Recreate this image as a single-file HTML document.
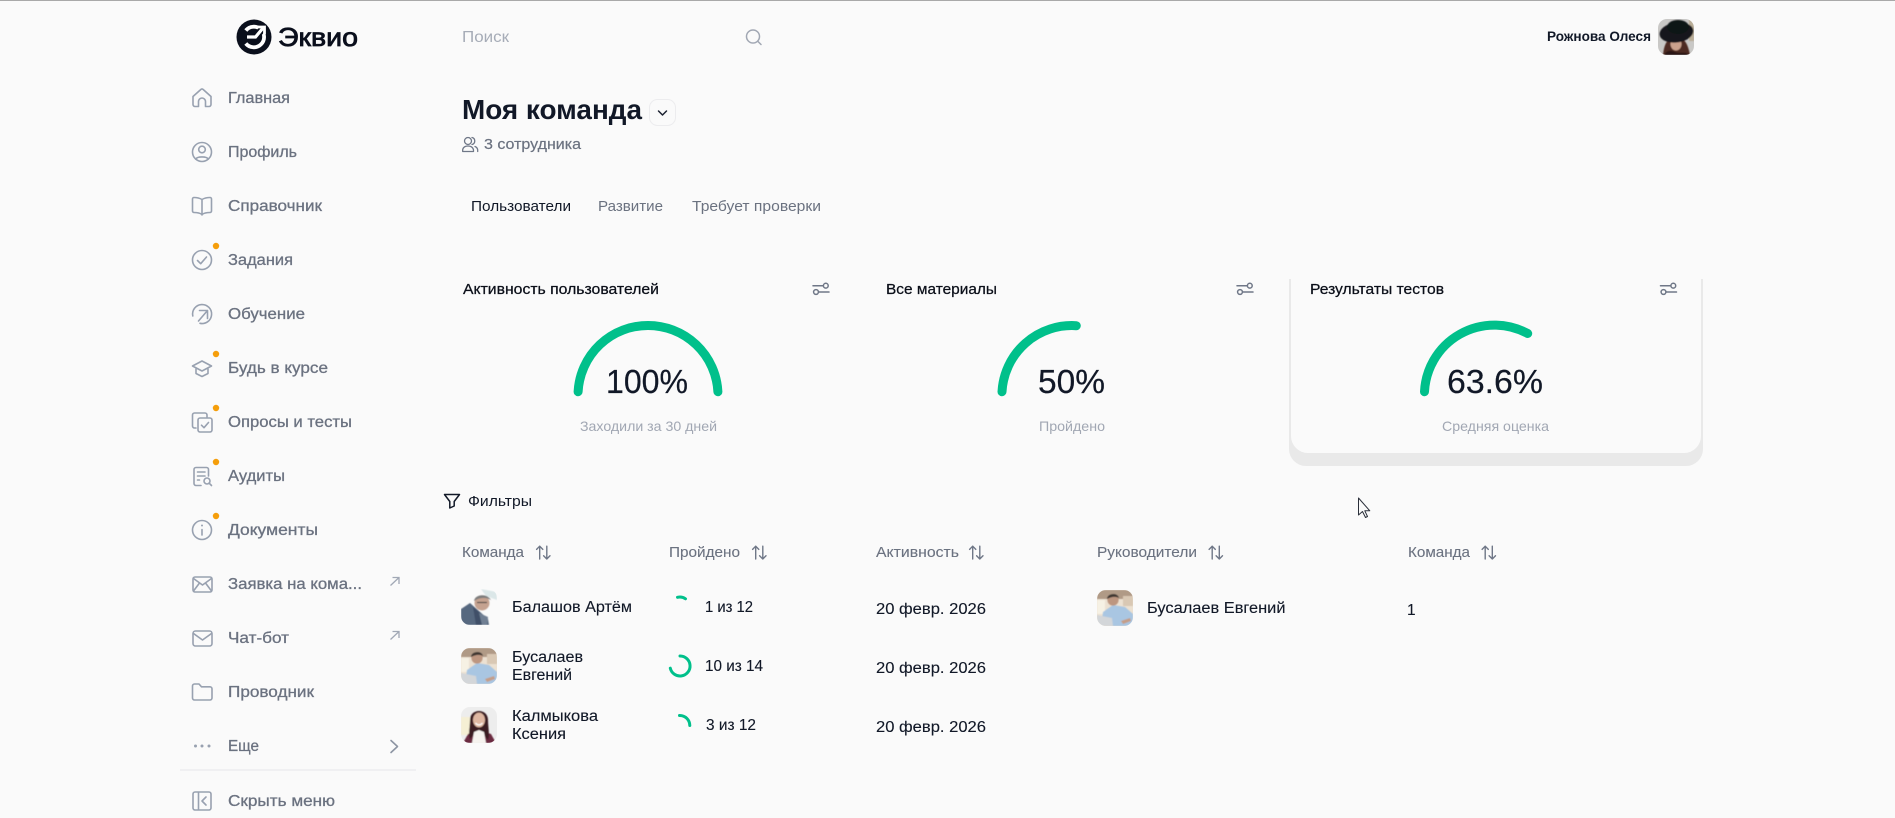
<!DOCTYPE html>
<html lang="ru">
<head>
<meta charset="utf-8">
<title>Моя команда</title>
<style>
html,body{margin:0;padding:0;background:#fafafa;width:1895px;height:818px;overflow:hidden}
svg{display:block}
text{font-family:"Liberation Sans","Noto Sans CJK JP",sans-serif;white-space:pre}
.n{font-size:16px;fill:#6b7280;stroke:#6b7280;stroke-width:.3}
.i{fill:none;stroke:#98a1b0;stroke-width:1.6;stroke-linecap:round;stroke-linejoin:round}
.d{fill:#f59e0b}
.h{font-size:15px;fill:#6b7280;stroke:#6b7280;stroke-width:.1}
.b{font-size:15.5px;fill:#111827;stroke:#111827;stroke-width:.12}
.c{font-size:15px;fill:#0b0f19;stroke:#0b0f19;stroke-width:.25}
.s{font-size:14px;fill:#a1a7b3}
.p{font-size:33px;fill:#111827;stroke:#111827;stroke-width:.2}
.g{fill:none;stroke:#00c08b;stroke-width:9;stroke-linecap:round}
.r{fill:none;stroke:#00c08b;stroke-width:3;stroke-linecap:round}
.f{fill:none;stroke:#6f7787;stroke-width:1.5;stroke-linecap:round}
</style>
</head>
<body>
<svg xmlns="http://www.w3.org/2000/svg" width="1895" height="818" viewBox="0 0 1895 818">
<defs>
<clipPath id="cp"><rect x="0" y="0" width="36" height="36" rx="9"/></clipPath>
<clipPath id="cardclip"><rect x="1280" y="279" width="430" height="200"/></clipPath>
<filter id="bl" x="-10%" y="-10%" width="120%" height="120%"><feGaussianBlur stdDeviation=".55"/></filter>
<g id="sort" fill="none" stroke="#6f7787" stroke-width="1.4" stroke-linecap="round" stroke-linejoin="round">
<path d="M3.700 14V1.200M.6 4.400 3.700 1.200 6.800 4.400"/>
<path d="M10.800 1.200V14M7.600 10.800l3.200 3.200 3.200-3.200"/>
</g>
<g id="set">
<path class="f" d="M0 1.700H10"/><circle class="f" cx="12.800" cy="1.700" r="2.400"/>
<path class="f" d="M6 8H16"/><circle class="f" cx="3" cy="8" r="2.400"/>
</g>
<g id="a1" clip-path="url(#cp)">
<rect width="36" height="36" fill="#fafafa"/>
<g filter="url(#bl)">
<path d="M20 0 36 3V11L25 7Z" fill="#dbe7e8"/>
<path d="M0 20 9 14 18 22 27 30 28 36H0Z" fill="#56687f"/>
<path d="M12 18 19 24 22 36H15Z" fill="#3f5068"/>
<path d="M18 24 27 28 26 36H21Z" fill="#6f7f93"/>
<circle cx="21" cy="14" r="7.500" fill="#c5a290"/>
<path d="M13 12C14 5 26 4 30 11 25 8 19 8 13 12Z" fill="#7d7d7d"/>
<path d="M16 13.500H26" stroke="#3c3c3c" stroke-width="1.100"/>
</g>
</g>
<g id="a2" clip-path="url(#cp)">
<rect width="36" height="36" fill="#ece1d2"/>
<g filter="url(#bl)">
<rect width="36" height="9" fill="#b09a86"/>
<rect x="0" y="10" width="8" height="14" fill="#f6f1e4"/>
<rect x="26" y="6" width="10" height="10" fill="#d9c8b4"/>
<path d="M6 22 16 15 28 17 36 24V36H4Z" fill="#a9c6e2"/>
<circle cx="16" cy="10" r="5.600" fill="#bd9680"/>
<path d="M10 9C10 3 21 2 22 8 18 6 14 7 10 9Z" fill="#3f3733"/>
<path d="M0 25 15 28 16 36H0Z" fill="#d3d6d9"/>
<path d="M24 31 33 28 34 31 26 34Z" fill="#c49e88"/>
</g>
</g>
<g id="a3" clip-path="url(#cp)">
<rect width="36" height="36" fill="#ededed"/>
<g filter="url(#bl)">
<rect x="0" y="10" width="9" height="18" fill="#f5efd4"/>
<path d="M2 36 7 27 12 25H24L30 27 35 36Z" fill="#6b2a41"/>
<path d="M9 13C9 1 27 1 27 13 27 20 29 28 27 33L22 26H14L9 32C7 26 9 20 9 13Z" fill="#3a1c20"/>
<ellipse cx="18" cy="13" rx="6" ry="7.400" fill="#dfb7a2"/>
<path d="M14.500 16C16.500 18.500 19.500 18.500 21.500 16" stroke="#fff" stroke-width="1.300" fill="none"/>
<path d="M11 36 13 25 18 23 23 25 25 36Z" fill="#f6f3ef"/>
</g>
</g>
</defs>

<rect width="1895" height="818" fill="#fafafa"/>
<rect x="0" y="0" width="1895" height="1" fill="#a9a9a9"/>

<!-- logo -->
<circle cx="254" cy="37" r="17.500" fill="#0a0f1c"/>
<path d="M245.800 30.500A10.300 10.300 0 1 1 245.800 43.500" fill="none" stroke="#fff" stroke-width="3.800"/>
<path d="M247 37H255.500L264 27" fill="none" stroke="#0a0f1c" stroke-width="7"/>
<path d="M247 37H255.500L263 28" fill="none" stroke="#fff" stroke-width="3.200"/>
<path d="M257.500 27H264.500V34" fill="none" stroke="#fff" stroke-width="2.800"/>
<text x="278" y="46" font-size="26" fill="#0a0f1c" stroke="#0a0f1c" stroke-width=".8" textLength="80" lengthAdjust="spacingAndGlyphs">Эквио</text>

<!-- nav icons -->
<path class="i" d="M193 96.500 200.800 89.500a1.800 1.800 0 0 1 2.400 0L211 96.500V104.500a2 2 0 0 1-2 2H205.500V101.500a3.500 3.500 0 0 0-7 0V106.500H195a2 2 0 0 1-2-2Z"/>
<circle class="i" cx="202" cy="152" r="9.500"/><circle class="i" cx="202" cy="149.500" r="3.300"/><path class="i" d="M195.800 159.200C197 156.200 207 156.200 208.200 159.200"/>
<path class="i" d="M202 199.500C199.500 198 196 197.500 194 197.500A1.500 1.500 0 0 0 192.500 199V211A1.500 1.500 0 0 0 194 212.500C197 212.500 200 213 202 214.500 204 213 207 212.500 210 212.500A1.500 1.500 0 0 0 211.500 211V199A1.500 1.500 0 0 0 210 197.500C208 197.500 204.500 198 202 199.500ZM202 199.500V215"/>
<circle class="i" cx="202" cy="260" r="9.500"/><path class="i" d="M197.500 260.500 200.700 263.700 206.500 257"/>
<path class="i" d="M192.800 316A9.500 9.500 0 1 1 200 323.300"/><path class="i" d="M198.500 321 207.500 310.500M199.500 310.500H207.500V318.500"/>
<path class="i" d="M192.500 366 202 361 211.500 366 202 371ZM196 369V373.500L202 376.500 208 373.500V369"/>
<path class="i" d="M196 428H194.500A2 2 0 0 1 192.500 426V415A2 2 0 0 1 194.500 413H205A2 2 0 0 1 207 415V417"/><rect class="i" x="198" y="418" width="14" height="14" rx="2"/><path class="i" d="M201.500 425.200 204 427.700 208.500 422.500"/>
<path class="i" d="M208.500 476V469.500A2 2 0 0 0 206.500 467.500H196A2 2 0 0 0 194 469.500V483.500A2 2 0 0 0 196 485.500H201"/><path class="i" d="M197.500 472H205M197.500 476H205M197.500 480H199.500"/><circle class="i" cx="207" cy="481" r="3"/><path class="i" d="M209.300 483.300 211.500 485.500"/>
<circle class="i" cx="202" cy="530" r="9.500"/><path class="i" d="M202 529.500V535"/><circle cx="202" cy="525.500" r="1" fill="#98a1b0"/>
<rect class="i" x="193" y="577" width="19" height="15" rx="2"/><path class="i" d="M193.500 578.500 202.500 585 211.500 578.500M193.500 591 199.500 583M211.500 591 205.500 583"/>
<rect class="i" x="193" y="631" width="19" height="15" rx="2.500"/><path class="i" d="M193.500 633.500 202.500 640 211.500 633.500"/>
<path class="i" d="M192.500 686A2 2 0 0 1 194.500 684H199L201.500 686.800H210A2 2 0 0 1 212 688.800V698A2 2 0 0 1 210 700H194.500A2 2 0 0 1 192.500 698Z"/>
<circle cx="195.500" cy="746" r="1.500" fill="#98a1b0"/><circle cx="202" cy="746" r="1.500" fill="#98a1b0"/><circle cx="209" cy="746" r="1.500" fill="#98a1b0"/>
<rect class="i" x="193" y="792" width="18" height="18" rx="2"/><path class="i" d="M198.500 792.500V809.500M206 797 202 801 206 805"/>

<circle class="d" cx="216" cy="246" r="3.200"/>
<circle class="d" cx="216" cy="354" r="3.200"/>
<circle class="d" cx="216" cy="408" r="3.200"/>
<circle class="d" cx="216" cy="462" r="3.200"/>
<circle class="d" cx="216" cy="516" r="3.200"/>

<path d="M390.500 585.500 399 577.500M392.500 577.500H399V584" fill="none" stroke="#a1a8b5" stroke-width="1.300"/>
<path d="M390.500 639.500 399 631.500M392.500 631.500H399V638" fill="none" stroke="#a1a8b5" stroke-width="1.300"/>
<path d="M391 740.500 397.500 746.500 391 752.500" fill="none" stroke="#8d95a3" stroke-width="1.600" stroke-linecap="round" stroke-linejoin="round"/>
<rect x="180" y="769.500" width="236" height="1" fill="#e6e7ea"/>

<!-- nav text -->
<text class="n" x="228" y="103" textLength="62" lengthAdjust="spacingAndGlyphs">Главная</text>
<text class="n" x="228" y="157" textLength="69" lengthAdjust="spacingAndGlyphs">Профиль</text>
<text class="n" x="228" y="211" textLength="94" lengthAdjust="spacingAndGlyphs">Справочник</text>
<text class="n" x="228" y="265" textLength="65" lengthAdjust="spacingAndGlyphs">Задания</text>
<text class="n" x="228" y="319" textLength="77" lengthAdjust="spacingAndGlyphs">Обучение</text>
<text class="n" x="228" y="373" textLength="100" lengthAdjust="spacingAndGlyphs">Будь в курсе</text>
<text class="n" x="228" y="427" textLength="124" lengthAdjust="spacingAndGlyphs">Опросы и тесты</text>
<text class="n" x="228" y="481" textLength="57" lengthAdjust="spacingAndGlyphs">Аудиты</text>
<text class="n" x="228" y="535" textLength="90" lengthAdjust="spacingAndGlyphs">Документы</text>
<text class="n" x="228" y="589" textLength="134" lengthAdjust="spacingAndGlyphs">Заявка на кома...</text>
<text class="n" x="228" y="643" textLength="61" lengthAdjust="spacingAndGlyphs">Чат-бот</text>
<text class="n" x="228" y="697" textLength="86" lengthAdjust="spacingAndGlyphs">Проводник</text>
<text class="n" x="228" y="751" textLength="31" lengthAdjust="spacingAndGlyphs">Еще</text>
<text class="n" x="228" y="806" textLength="107" lengthAdjust="spacingAndGlyphs">Скрыть меню</text>

<!-- top bar -->
<text x="462" y="42" font-size="16" fill="#a6acb7" textLength="47" lengthAdjust="spacingAndGlyphs">Поиск</text>
<circle cx="753" cy="36.500" r="6.500" fill="none" stroke="#a1a7b3" stroke-width="1.500"/><path d="M758 41.500 761 44.500" stroke="#a1a7b3" stroke-width="1.500" stroke-linecap="round"/>
<text x="1547" y="41" font-size="13.500" font-weight="700" fill="#111827" textLength="104" lengthAdjust="spacingAndGlyphs">Рожнова Олеся</text>
<g transform="translate(1658 19)" clip-path="url(#cp)">
<rect width="36" height="36" fill="#c9c8c6"/>
<g filter="url(#bl)">
<rect x="31" width="5" height="22" fill="#b9ad97"/>
<path d="M5 36C6 26 9 18 18 18 27 18 30 26 32 36Z" fill="#4d2c20"/>
<ellipse cx="18" cy="25" rx="5.500" ry="6.500" fill="#cba28d"/>
<ellipse cx="18.500" cy="13.500" rx="17" ry="10" fill="#16171b" transform="rotate(-8 18.500 13.500)"/>
<ellipse cx="20" cy="8" rx="11" ry="7" fill="#111216"/>
<path d="M6 36C9 31 13 31 17 33 23 35 28 32 31 36Z" fill="#2c1712"/>
</g>
</g>

<!-- header -->
<text x="462" y="119" font-size="28" font-weight="700" fill="#111827" textLength="180" lengthAdjust="spacingAndGlyphs">Моя команда</text>
<rect x="649.500" y="99.500" width="26" height="26" rx="8" fill="#fafafa" stroke="#ececee"/>
<path d="M658.500 111 662.500 115 666.500 111" fill="none" stroke="#1b2130" stroke-width="1.500" stroke-linecap="round" stroke-linejoin="round"/>
<circle cx="468" cy="141" r="3.500" fill="none" stroke="#6f7787" stroke-width="1.300"/>
<path d="M462.700 151.500C462.200 147.500 465 146 468 146S473.800 147.500 473.500 151.500Z" fill="none" stroke="#6f7787" stroke-width="1.300" stroke-linejoin="round"/>
<path d="M472 137.500A3.600 3.600 0 0 1 472 144.500M475 146.500C477 147.300 478 149 477.700 151.500" fill="none" stroke="#6f7787" stroke-width="1.300" stroke-linecap="round"/>
<text x="484" y="149" font-size="15" fill="#6b7280" stroke="#6b7280" stroke-width=".2" textLength="97" lengthAdjust="spacingAndGlyphs">3 сотрудника</text>

<!-- tabs -->
<text x="471" y="211" font-size="15" fill="#111827" textLength="100" lengthAdjust="spacingAndGlyphs">Пользователи</text>
<text x="598" y="211" font-size="15" fill="#6b7280" textLength="65" lengthAdjust="spacingAndGlyphs">Развитие</text>
<text x="692" y="211" font-size="15" fill="#6b7280" textLength="129" lengthAdjust="spacingAndGlyphs">Требует проверки</text>

<!-- hovered card -->
<g clip-path="url(#cardclip)">
<rect x="1289" y="240" width="414" height="226" rx="17" fill="#e9e9e9"/>
<rect x="1291" y="230" width="410" height="223" rx="17" fill="#fafafa"/>
</g>

<!-- cards -->
<text class="c" x="463" y="294" textLength="196" lengthAdjust="spacingAndGlyphs">Активность пользователей</text>
<use href="#set" x="813" y="284"/>
<path class="g" d="M578.100 391.700A70 70 0 0 1 717.900 391.700"/>
<text class="p" x="606" y="393" textLength="82" lengthAdjust="spacingAndGlyphs">100%</text>
<text class="s" x="580" y="431" textLength="137" lengthAdjust="spacingAndGlyphs">Заходили за 30 дней</text>

<text class="c" x="886" y="294" textLength="111" lengthAdjust="spacingAndGlyphs">Все материалы</text>
<use href="#set" x="1237" y="284"/>
<path class="g" d="M1002 391.700A70 70 0 0 1 1076.300 325.700"/>
<text class="p" x="1038" y="393" textLength="67" lengthAdjust="spacingAndGlyphs">50%</text>
<text class="s" x="1039" y="431" textLength="66" lengthAdjust="spacingAndGlyphs">Пройдено</text>

<text class="c" x="1310" y="294" textLength="134" lengthAdjust="spacingAndGlyphs">Результаты тестов</text>
<use href="#set" x="1660.500" y="284"/>
<path class="g" d="M1424.500 391.700A70 70 0 0 1 1527.700 333.500"/>
<text class="p" x="1447" y="393" textLength="96" lengthAdjust="spacingAndGlyphs">63.6%</text>
<text class="s" x="1442" y="431" textLength="107" lengthAdjust="spacingAndGlyphs">Средняя оценка</text>

<!-- cursor -->
<path d="M1358.500 498V515L1362.500 511.500 1365.500 517.500 1367.500 516.500 1364.800 510.800H1369.800Z" fill="#fafafa" stroke="#2a2f3a" stroke-width="1" stroke-linejoin="round"/>

<!-- filter -->
<path d="M444.500 494.500H459.500L454.200 501.500V506L449.800 508V501.500Z" fill="none" stroke="#111827" stroke-width="1.500" stroke-linejoin="round"/>
<text x="468" y="506" font-size="14.500" fill="#111827" textLength="64" lengthAdjust="spacingAndGlyphs">Фильтры</text>

<!-- table head -->
<text class="h" x="462" y="557" textLength="62" lengthAdjust="spacingAndGlyphs">Команда</text><use href="#sort" x="536" y="545"/>
<text class="h" x="669" y="557" textLength="71" lengthAdjust="spacingAndGlyphs">Пройдено</text><use href="#sort" x="752" y="545"/>
<text class="h" x="876" y="557" textLength="83" lengthAdjust="spacingAndGlyphs">Активность</text><use href="#sort" x="969" y="545"/>
<text class="h" x="1097" y="557" textLength="100" lengthAdjust="spacingAndGlyphs">Руководители</text><use href="#sort" x="1208.500" y="545"/>
<text class="h" x="1408" y="557" textLength="62" lengthAdjust="spacingAndGlyphs">Команда</text><use href="#sort" x="1481.500" y="545"/>

<!-- rows -->
<use href="#a1" x="461" y="589"/>
<text class="b" x="512" y="612" textLength="120" lengthAdjust="spacingAndGlyphs">Балашов Артём</text>
<path class="r" d="M677.500 597.300A10 10 0 0 1 685.500 598.800"/>
<text class="b" x="705" y="612" textLength="48" lengthAdjust="spacingAndGlyphs">1 из 12</text>
<text class="b" x="876" y="614" textLength="110" lengthAdjust="spacingAndGlyphs">20 февр. 2026</text>
<use href="#a2" x="1097" y="590"/>
<text class="b" x="1147" y="613" textLength="138.500" lengthAdjust="spacingAndGlyphs">Бусалаев Евгений</text>
<text class="b" x="1407" y="615">1</text>

<use href="#a2" x="461" y="648"/>
<text class="b" x="512" y="662" textLength="71" lengthAdjust="spacingAndGlyphs">Бусалаев</text>
<text class="b" x="512" y="680" textLength="60" lengthAdjust="spacingAndGlyphs">Евгений</text>
<path class="r" d="M680 656A10 10 0 1 1 670.300 668.200"/>
<text class="b" x="705" y="671" textLength="58" lengthAdjust="spacingAndGlyphs">10 из 14</text>
<text class="b" x="876" y="673" textLength="110" lengthAdjust="spacingAndGlyphs">20 февр. 2026</text>

<use href="#a3" x="461" y="707"/>
<text class="b" x="512" y="721" textLength="86" lengthAdjust="spacingAndGlyphs">Калмыкова</text>
<text class="b" x="512" y="739" textLength="54" lengthAdjust="spacingAndGlyphs">Ксения</text>
<path class="r" d="M679.500 715.500A10 10 0 0 1 689.800 725.500"/>
<text class="b" x="706" y="730" textLength="50" lengthAdjust="spacingAndGlyphs">3 из 12</text>
<text class="b" x="876" y="732" textLength="110" lengthAdjust="spacingAndGlyphs">20 февр. 2026</text>
</svg>
</body>
</html>
